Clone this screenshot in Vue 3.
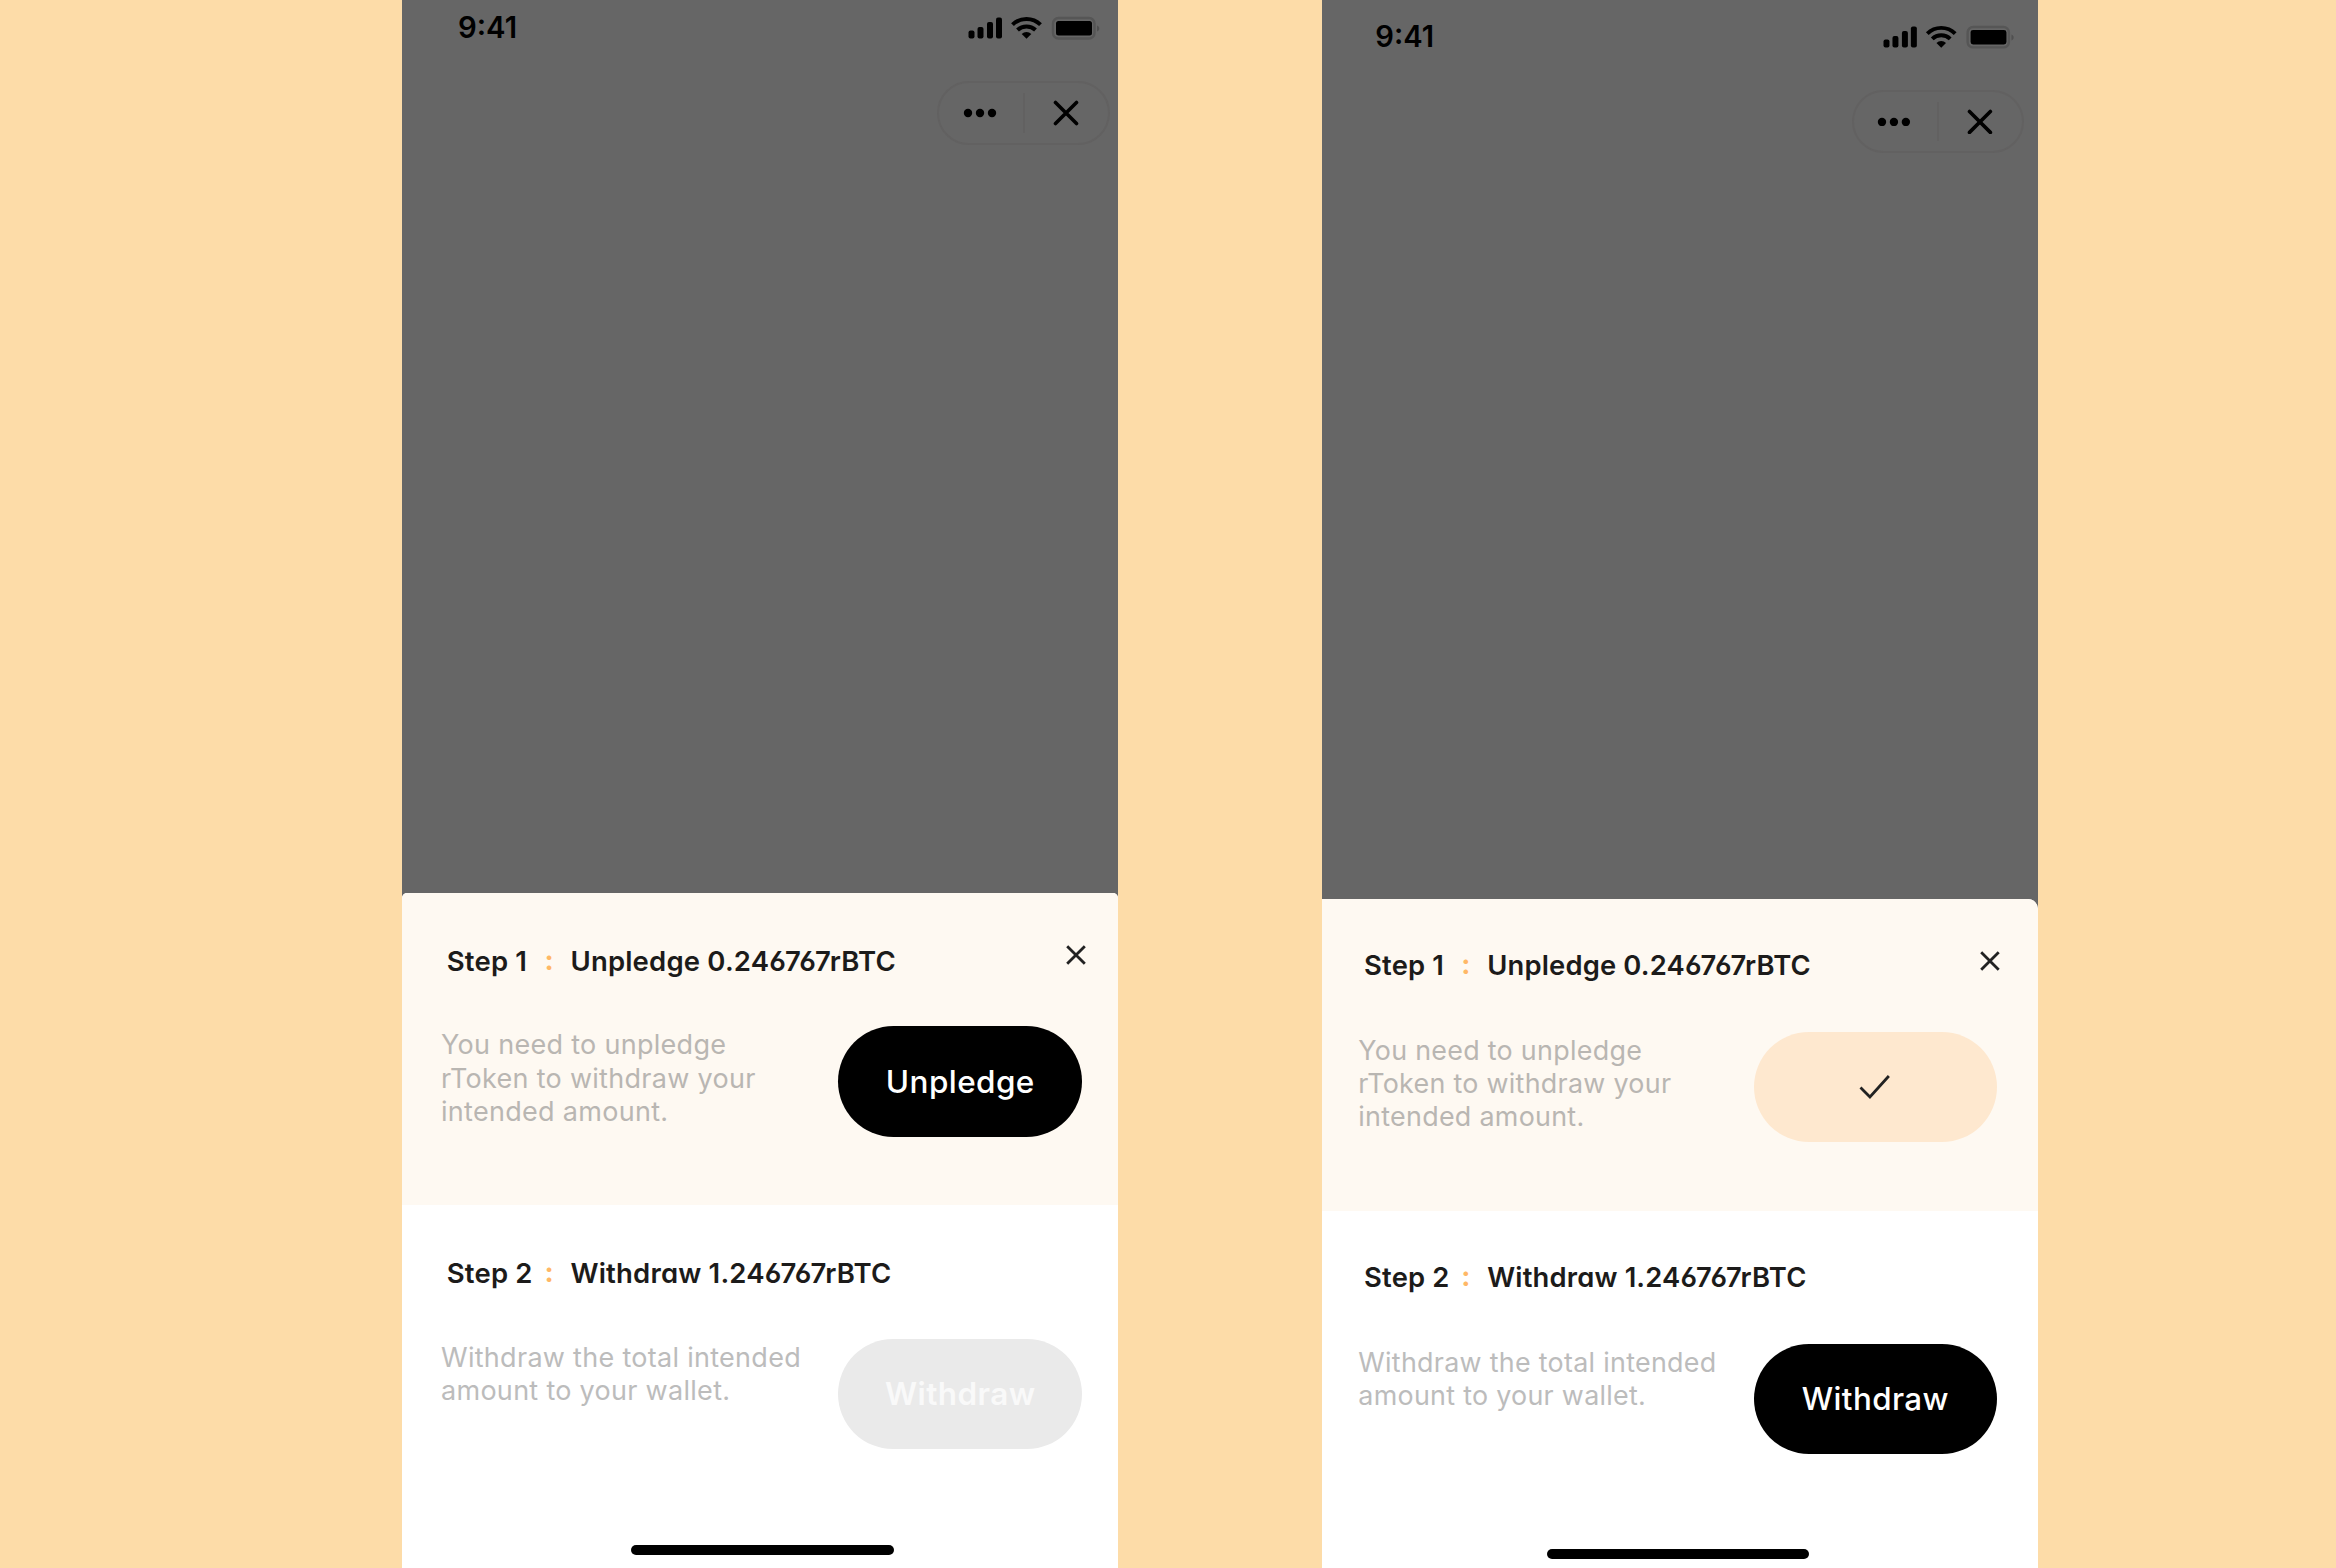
<script setup>
const phones = [
  {
    id: 'pending',
    steps: [
      {
        label: 'Step 1',
        title: 'Unpledge 0.246767rBTC',
        lines: ['You need to unpledge', 'rToken to withdraw your', 'intended amount.'],
        action: 'Unpledge',
        state: 'active',
      },
      {
        label: 'Step 2',
        title: 'Withdraw 1.246767rBTC',
        lines: ['Withdraw the total intended', 'amount to your wallet.'],
        action: 'Withdraw',
        state: 'disabled',
      },
    ],
  },
  {
    id: 'unpledged',
    steps: [
      {
        label: 'Step 1',
        title: 'Unpledge 0.246767rBTC',
        lines: ['You need to unpledge', 'rToken to withdraw your', 'intended amount.'],
        action: '',
        state: 'done',
      },
      {
        label: 'Step 2',
        title: 'Withdraw 1.246767rBTC',
        lines: ['Withdraw the total intended', 'amount to your wallet.'],
        action: 'Withdraw',
        state: 'active',
      },
    ],
  },
]
</script>

<template>
  <main class="stage">
    <section v-for="phone in phones" :key="phone.id" class="phone" :class="phone.id">
      <div class="backdrop">
        <header class="status">
          <span class="time">9:41</span>
          <svg class="indicators" viewBox="0 0 134 24" aria-hidden="true">
            <rect x="0.5" y="14.5" width="6" height="8" rx="2" />
            <rect x="9.5" y="11" width="6" height="11.5" rx="2" />
            <rect x="19" y="6" width="6" height="16.5" rx="2" />
            <rect x="28" y="1.5" width="6" height="21" rx="2" />
            <g fill="none" stroke="#000" stroke-width="4">
              <path d="M44.5 8.6a20 20 0 0 1 28 0" />
              <path d="M49.5 14a13 13 0 0 1 18 0" />
            </g>
            <path d="M53.7 18a7 7 0 0 1 9.6 0L58.5 22.8z" />
            <rect x="85" y="2" width="41.5" height="20.5" rx="5.5" fill="none" stroke="#565656" stroke-width="2.4" />
            <rect x="88" y="5" width="36" height="14.5" rx="2.5" />
            <path d="M129 9.5c3 1 3 5 0 6z" fill="#505050" />
          </svg>
        </header>
        <div class="capsule">
          <svg class="dots" viewBox="0 0 34 10" aria-hidden="true">
            <circle cx="5" cy="5" r="4.2" />
            <circle cx="17" cy="5" r="4.2" />
            <circle cx="29" cy="5" r="4.2" />
          </svg>
          <i class="rule"></i>
          <svg class="exit" viewBox="0 0 26 26" aria-hidden="true">
            <path d="M2.5 2.5l21 21M23.5 2.5l-21 21" />
          </svg>
        </div>
      </div>

      <div class="sheet">
        <article v-for="(step, i) in phone.steps" :key="step.label" class="step">
          <h2 class="heading">
            <span class="label">{{ step.label }}</span>
            <span class="colon">:</span>
            <span class="title">{{ step.title }}</span>
            <svg v-if="i === 0" class="close" viewBox="0 0 20 20" aria-hidden="true">
              <path d="M1.2 1.2l17.6 17.6M18.8 1.2L1.2 18.8" />
            </svg>
          </h2>
          <div class="content">
            <p class="note">
              <span v-for="line in step.lines" :key="line">{{ line }}</span>
            </p>
            <button class="action" :class="step.state" type="button">
              <svg v-if="step.state === 'done'" class="check" viewBox="0 0 32 26" aria-hidden="true">
                <path d="M1.5 13.5l9.5 9.5L30 2" />
              </svg>
              <template v-else>{{ step.action }}</template>
            </button>
          </div>
        </article>
        <div class="home"></div>
      </div>
    </section>
  </main>
</template>

<style>
body {
  margin: 0;
}
</style>

<style scoped>
.stage {
  display: flex;
  gap: 204px;
  box-sizing: border-box;
  width: 2336px;
  height: 1568px;
  padding-left: 402px;
  background: #fddca8;
  font-family: Inter, "Liberation Sans", sans-serif;
  overflow: hidden;
}

.phone {
  --u: 1px;
  --shift: 0px;
  --bar: 0px;
  --sheet: 892.5px;
  --step: 312.5px;
  --rest: 339.5px;
  --radius: 5px 5px 0 0;
  display: flex;
  flex-direction: column;
  width: 716px;
  height: 1568px;
  background: #666;
  overflow: hidden;
}

.unpledged {
  --u: 0.9955px;
  --shift: -2.5px;
  --bar: 9.5px;
  --sheet: 898.5px;
  --step: 312px;
  --rest: 338.5px;
  --radius: 0 10px 0 0;
}

.backdrop {
  flex: none;
  box-sizing: border-box;
  height: var(--sheet);
  width: calc(716 * var(--u));
  margin-left: var(--shift);
  padding-top: var(--bar);
}

.status {
  display: flex;
  justify-content: space-between;
  height: calc(80.5 * var(--u));
  box-sizing: border-box;
  padding: calc(12 * var(--u)) calc(16 * var(--u)) 0 calc(56 * var(--u));
}

.time {
  font-size: calc(29.3 * var(--u));
  font-weight: 600;
  line-height: calc(32 * var(--u));
}

.indicators {
  width: calc(134 * var(--u));
  height: calc(24 * var(--u));
  margin-top: calc(4 * var(--u));
}

.capsule {
  display: flex;
  align-items: center;
  box-sizing: border-box;
  width: calc(173 * var(--u));
  height: calc(64 * var(--u));
  margin-left: calc(535 * var(--u));
  padding-left: calc(23.5 * var(--u));
  border: 2px solid #626161;
  border-radius: calc(32 * var(--u));
}

.dots {
  width: calc(34 * var(--u));
  height: calc(10 * var(--u));
}

.rule {
  width: 2px;
  height: calc(40 * var(--u));
  margin-left: calc(26 * var(--u));
  background: #626161;
}

.exit {
  width: calc(26 * var(--u));
  height: calc(26 * var(--u));
  margin-left: calc(28 * var(--u));
  stroke: #000;
  stroke-width: 3.6;
  stroke-linecap: round;
}

.sheet {
  flex: 1;
  background: #fff;
  border-radius: var(--radius);
  overflow: hidden;
}

.step {
  box-sizing: border-box;
  width: 716px;
  height: var(--step);
  padding-top: calc(51 * var(--u));
}

.step:first-child {
  background: #fef9f2;
}

.step:nth-child(2) {
  height: var(--rest);
}

.heading {
  display: flex;
  height: calc(34 * var(--u));
  margin: 0 0 0 var(--shift);
  padding-left: calc(44.8 * var(--u));
  font-size: calc(27.5 * var(--u));
  line-height: calc(34 * var(--u));
  font-weight: 600;
  font-feature-settings: "cv11", "cv03";
  letter-spacing: calc(0.18 * var(--u));
  color: #1c1b1a;
  white-space: nowrap;
}

.label {
  width: calc(97.7 * var(--u));
}

.colon {
  width: calc(26 * var(--u));
  line-height: calc(32 * var(--u));
  font-weight: 700;
  color: #ffb866;
}

.title {
  width: calc(453 * var(--u));
}

.close {
  width: calc(20 * var(--u));
  height: calc(20 * var(--u));
  margin: calc(1.5 * var(--u)) 0 0 calc(42.5 * var(--u));
  stroke: #222;
  stroke-width: 2.8;
}

.content {
  display: flex;
  justify-content: space-between;
  width: calc(641.3 * var(--u));
  margin-left: var(--shift);
  padding: calc(48.7 * var(--u)) 0 0 calc(39 * var(--u));
}

.note {
  margin: calc(2.3 * var(--u)) 0 0;
  font-size: calc(27 * var(--u));
  line-height: calc(33.2 * var(--u));
  letter-spacing: calc(0.29 * var(--u));
  color: #b9b6b2;
  white-space: nowrap;
}

.step:nth-child(2) .note {
  color: #bcbcbc;
}

.note span {
  display: block;
}

.action {
  display: flex;
  align-items: center;
  justify-content: center;
  width: calc(244 * var(--u));
  height: calc(110.5 * var(--u));
  padding: 0;
  border: 0;
  border-radius: calc(56 * var(--u));
  background: #000;
  color: #fff;
  font-family: inherit;
  font-size: calc(31.5 * var(--u));
  letter-spacing: calc(0.4 * var(--u));
  font-weight: 500;
}

.action.disabled {
  background: #eaeaea;
  color: #f9f9f9;
  font-weight: 600;
}

.action.done {
  background: #fee8cf;
}

.check {
  width: calc(32 * var(--u));
  height: calc(26 * var(--u));
  fill: none;
  stroke: #222;
  stroke-width: 2.8;
}

.home {
  width: calc(263 * var(--u));
  height: calc(10.5 * var(--u));
  margin-left: calc(229 * var(--u) + var(--shift));
  border-radius: 6px;
  background: #000;
}
</style>
